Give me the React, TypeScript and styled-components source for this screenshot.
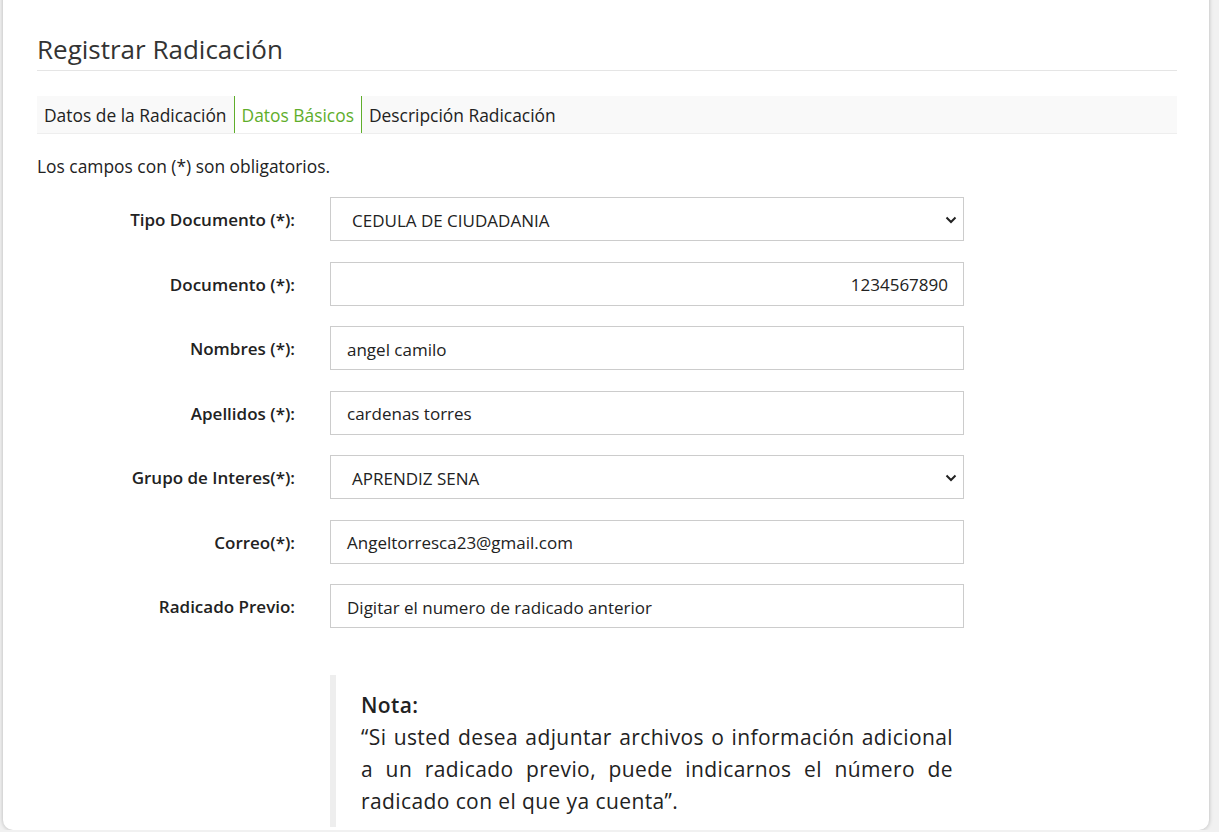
import React from "react";
import styled, { createGlobalStyle } from "styled-components";

const Global = createGlobalStyle`
  html, body { margin: 0; padding: 0; background: #f1f1f1; }
  body { font-family: "Open Sans", sans-serif; color: #222; }
`;

const Card = styled.div`
  margin: -20px 10px 0 3px;
  background: #fff;
  border-radius: 10px;
  box-shadow: 0 0 4px rgba(0,0,0,0.25);
  padding: 52px 32px 20px 34px;
  height: 850px;
  box-sizing: border-box;
`;
const Title = styled.h1`
  margin: 0;
  font-weight: 400;
  font-size: 26px;
  color: #333;
  line-height: 34px;
  padding-bottom: 4px;
  border-bottom: 1px solid #e5e5e5;
`;
const Tabs = styled.div`
  margin-top: 25px;
  display: flex;
  background: #f9f9f9;
  height: 37px;
  border-bottom: 1px solid #eee;
`;
const Tab = styled.div<{ $active?: boolean }>`
  padding: 0 7px;
  display: flex;
  align-items: center;
  font-size: 17.4px;
  color: ${p => (p.$active ? "#5fae2b" : "#222")};
  background: ${p => (p.$active ? "#fff" : "transparent")};
  border-left: ${p => (p.$active ? "1px solid #5fae2b" : "none")};
  border-right: ${p => (p.$active ? "1px solid #5fae2b" : "none")};
`;
const Note = styled.p`
  margin: 20px 0 19px;
  font-size: 17.4px;
`;
const Form = styled.div`
  display: flex;
  flex-direction: column;
  gap: 20.5px;
`;
const Row = styled.div`
  display: grid;
  grid-template-columns: 258px 634px;
  column-gap: 35px;
  align-items: start;
`;
const Label = styled.label`
  text-align: right;
  font-weight: 600;
  font-size: 17px;
  padding-top: 11px;
`;
const Field = styled.div<{ $right?: boolean }>`
  height: 44px;
  box-sizing: border-box;
  border: 1px solid #ccc;
  display: flex;
  align-items: center;
  justify-content: ${p => (p.$right ? "flex-end" : "space-between")};
  padding: 2px 15px 0 16px;
  font-size: 17px;
  color: #222;
`;
const SelectText = styled.span`
  padding-left: 5px;
`;
const SelectRow = styled(Field)`
  padding-right: 5px;
`;
const Quote = styled.div`
  margin: 47px 0 0 293px;
  border-left: 6px solid #eee;
  padding: 14px 0 10px 25px;
  width: 592px;
  font-size: 21px;
  line-height: 32px;
  text-align: justify;
  letter-spacing: 0.4px;
`;
const QuoteHead = styled.div`
  font-weight: 600;
`;

const Chevron = () => (
  <svg width="14" height="14" viewBox="0 0 14 14">
    <path d="M2.5 4.5l4.5 4.5 4.5-4.5" fill="none" stroke="#222" strokeWidth="2" />
  </svg>
);

const rows: [string, string, "sel" | "right" | "text"][] = [
  ["Tipo Documento (*):", "CEDULA DE CIUDADANIA", "sel"],
  ["Documento (*):", "1234567890", "right"],
  ["Nombres (*):", "angel camilo", "text"],
  ["Apellidos (*):", "cardenas torres", "text"],
  ["Grupo de Interes(*):", "APRENDIZ SENA", "sel"],
  ["Correo(*):", "Angeltorresca23@gmail.com", "text"],
  ["Radicado Previo:", "Digitar el numero de radicado anterior", "text"],
];

export default function App() {
  return (
    <>
      <Global />
      <Card>
        <Title>Registrar Radicación</Title>
        <Tabs>
          <Tab>Datos de la Radicación</Tab>
          <Tab $active>Datos Básicos</Tab>
          <Tab>Descripción Radicación</Tab>
        </Tabs>
        <Note>Los campos con (*) son obligatorios.</Note>
        <Form>
          {rows.map(([l, v, k]) => (
            <Row key={l}>
              <Label>{l}</Label>
              {k === "sel" ? (
                <SelectRow>
                  <SelectText>{v}</SelectText>
                  <Chevron />
                </SelectRow>
              ) : (
                <Field $right={k === "right"}>
                  <span>{v}</span>
                </Field>
              )}
            </Row>
          ))}
        </Form>
        <Quote>
          <QuoteHead>Nota:</QuoteHead>
          “Si usted desea adjuntar archivos o información adicional a un radicado previo, puede indicarnos el número de radicado con el que ya cuenta”.
        </Quote>
      </Card>
    </>
  );
}
